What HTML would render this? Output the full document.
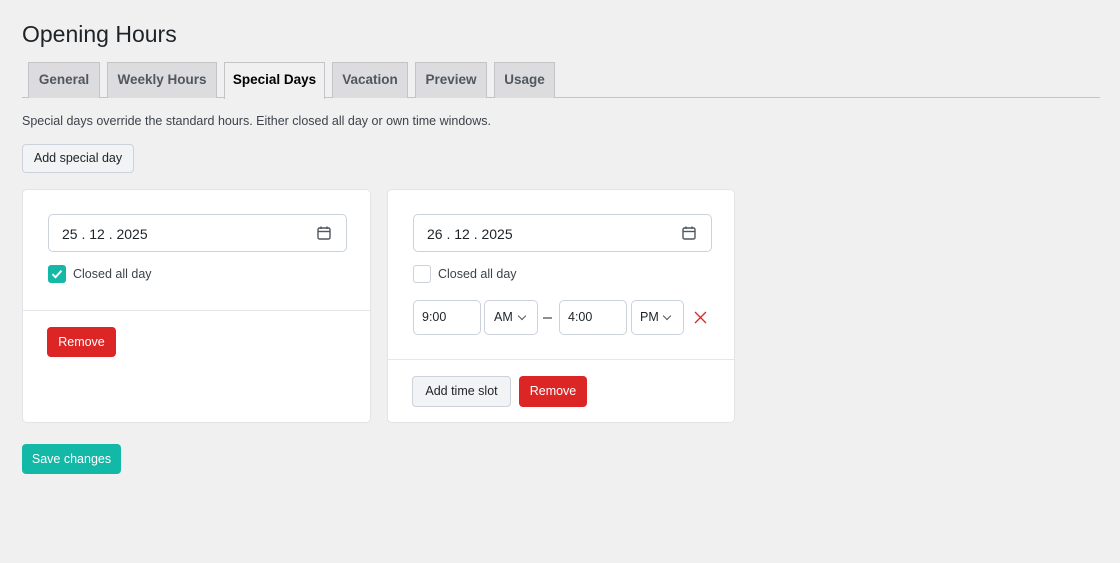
<!DOCTYPE html>
<html><head><style>
*{box-sizing:border-box}
body{margin:0;background:#f0f0f1;font-family:"Liberation Sans",sans-serif;color:#1d2327;width:1120px;height:563px;overflow:hidden;position:relative}
.a{position:absolute}
h1{position:absolute;left:22px;top:21px;margin:0;font-size:23px;font-weight:400}
.tab{position:absolute;top:62px;height:36px;background:#dcdcde;border:1px solid #c3c4c7;border-bottom:none;font-size:13.5px;font-weight:600;color:#50575e;text-align:center;line-height:34px}
.tab.on{background:#f0f0f1;color:#000;height:37px}
.line{left:22px;top:97px;width:1078px;height:1px;background:#c3c4c7}
.btn{position:absolute;border-radius:4px;font-size:12.5px;text-align:center}
.gray{background:#f1f3f5;border:1px solid #cbd2dc;color:#1d2327}
.red{background:#dc2626;color:#fff}
.card{position:absolute;background:#fff;border:1px solid #e2e4e7;border-radius:5px}
.inp{position:absolute;border:1px solid #cbd2dc;border-radius:5px;background:#fff;font-size:14px}
.cb{position:absolute;width:18px;height:18px;border-radius:3px}
.lbl{position:absolute;font-size:12.5px;color:#3c434a}
.sep{position:absolute;left:0;right:0;height:1px;background:#e5e7eb}
.chev{position:absolute;width:6px;height:6px;border-right:1.3px solid #50575e;border-bottom:1.3px solid #50575e;transform:rotate(45deg)}
</style></head><body>
<h1>Opening Hours</h1>
<div class="a line"></div>
<div class="tab" style="left:28px;width:72px">General</div>
<div class="tab" style="left:107px;width:110px">Weekly Hours</div>
<div class="tab on" style="left:224px;width:101px">Special Days</div>
<div class="tab" style="left:332px;width:76px">Vacation</div>
<div class="tab" style="left:415px;width:72px">Preview</div>
<div class="tab" style="left:494px;width:61px">Usage</div>
<div class="a" style="left:22px;top:114px;font-size:12.5px;color:#3c434a">Special days override the standard hours. Either closed all day or own time windows.</div>
<div class="btn gray" style="left:22px;top:144px;width:112px;height:29px;line-height:27px">Add special day</div>

<div class="card" style="left:22px;top:189px;width:349px;height:234px">
 <div class="inp" style="left:25px;top:24px;width:299px;height:38px;line-height:38px;padding-left:13px">25 . 12 . 2025</div>
 <svg class="a" style="left:293px;top:35px" width="16" height="16" viewBox="0 0 16 16"><rect x="2" y="3" width="12" height="11" rx="1.5" fill="none" stroke="#50575e" stroke-width="1.4"/><line x1="2" y1="6.5" x2="14" y2="6.5" stroke="#50575e" stroke-width="1.4"/><line x1="5" y1="1.5" x2="5" y2="4" stroke="#50575e" stroke-width="1.4"/><line x1="11" y1="1.5" x2="11" y2="4" stroke="#50575e" stroke-width="1.4"/></svg>
 <div class="cb" style="left:25px;top:75px;background:#14b8a6"><svg width="18" height="18"><path d="M4.5 9.2l3 3 6-6.5" fill="none" stroke="#fff" stroke-width="2"/></svg></div>
 <div class="lbl" style="left:50px;top:77px">Closed all day</div>
 <div class="sep" style="top:120px"></div>
 <div class="btn red" style="left:24px;top:137px;width:69px;height:30px;line-height:31px">Remove</div>
</div>

<div class="card" style="left:387px;top:189px;width:348px;height:234px">
 <div class="inp" style="left:25px;top:24px;width:299px;height:38px;line-height:38px;padding-left:13px">26 . 12 . 2025</div>
 <svg class="a" style="left:293px;top:35px" width="16" height="16" viewBox="0 0 16 16"><rect x="2" y="3" width="12" height="11" rx="1.5" fill="none" stroke="#50575e" stroke-width="1.4"/><line x1="2" y1="6.5" x2="14" y2="6.5" stroke="#50575e" stroke-width="1.4"/><line x1="5" y1="1.5" x2="5" y2="4" stroke="#50575e" stroke-width="1.4"/><line x1="11" y1="1.5" x2="11" y2="4" stroke="#50575e" stroke-width="1.4"/></svg>
 <div class="cb" style="left:25px;top:75px;border:1px solid #cbd2dc"></div>
 <div class="lbl" style="left:50px;top:77px">Closed all day</div>
 <div class="inp" style="left:25px;top:110px;width:68px;height:35px;line-height:33px;padding-left:8px;font-size:12.5px">9:00</div>
 <div class="inp" style="left:96px;top:110px;width:54px;height:35px;line-height:33px;padding-left:9px;font-size:12.5px">AM</div>
 <div class="chev" style="left:131px;top:123px"></div>
 <div class="a" style="left:155px;top:127px;width:9px;height:1.5px;background:#8c8f94"></div>
 <div class="inp" style="left:171px;top:110px;width:68px;height:35px;line-height:33px;padding-left:8px;font-size:12.5px">4:00</div>
 <div class="inp" style="left:243px;top:110px;width:53px;height:35px;line-height:33px;padding-left:8px;font-size:12.5px">PM</div>
 <div class="chev" style="left:276px;top:123px"></div>
 <svg class="a" style="left:306px;top:121px" width="13" height="13"><path d="M1 1L12 12M12 1L1 12" stroke="#dc2626" stroke-width="1.3"/></svg>
 <div class="sep" style="top:169px"></div>
 <div class="btn gray" style="left:24px;top:186px;width:99px;height:31px;line-height:29px">Add time slot</div>
 <div class="btn red" style="left:131px;top:186px;width:68px;height:31px;line-height:31px">Remove</div>
</div>

<div class="btn" style="left:22px;top:444px;width:99px;height:30px;line-height:30px;background:#14b8a6;color:#fff">Save changes</div>
</body></html>
